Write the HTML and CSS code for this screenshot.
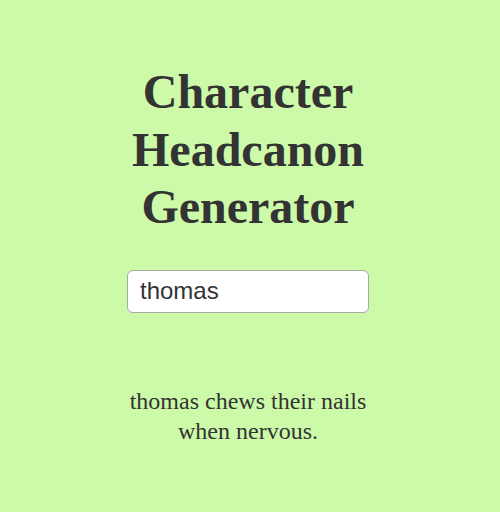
FILE: index.html
```html
<!DOCTYPE html>
<html>
<head>
<meta charset="utf-8">
<link rel="stylesheet" href="styles.css">
</head>
<body>
<main class="page">
  <h1 class="title">Character Headcanon Generator</h1>
  <input class="name-input" type="text" value="thomas">
  <p class="result">thomas chews their nails when nervous.</p>
</main>
</body>
</html>
```
FILE: styles.css
```css
html, body {
  margin: 0;
  padding: 0;
  background: #ccfaa8;
  height: 100%;
}
.page {
  display: flex;
  flex-direction: column;
  align-items: center;
  padding-top: 63px;
  padding-right: 4px;
  color: #333;
  font-family: "Liberation Serif", "Times New Roman", serif;
  text-align: center;
}
.title {
  width: 250px;
  margin: 0;
  font-size: 48px;
  font-weight: bold;
  line-height: 1.2;
}
.name-input {
  margin-top: 34px;
  width: 242px;
  height: 43px;
  box-sizing: border-box;
  padding: 0 12px;
  border: 1px solid #a8a8a8;
  border-radius: 6px;
  background: #fff;
  font-family: "Liberation Sans", Arial, sans-serif;
  font-size: 24px;
  color: #333;
  outline: none;
}
.result {
  width: 260px;
  margin: 73px 0 0;
  font-size: 24px;
  line-height: 30px;
}
```
